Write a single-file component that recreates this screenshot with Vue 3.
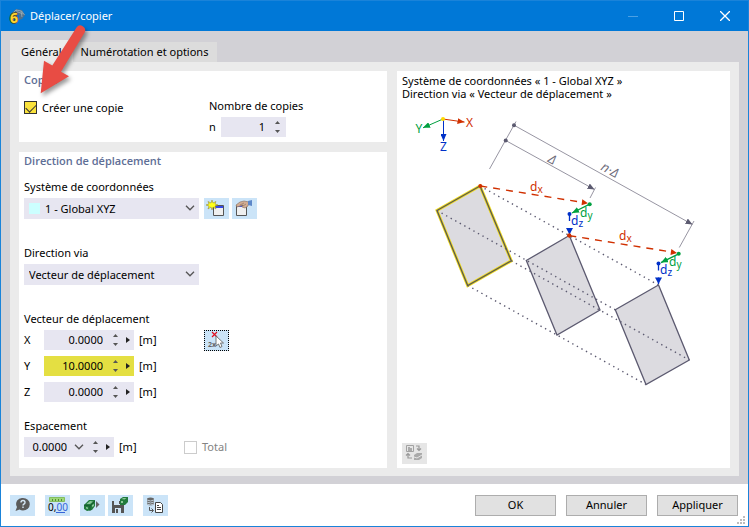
<script setup>
import { reactive, ref } from 'vue'

const makeCopy = ref(true)
const copies = ref('1')
const system = ref('1 - Global XYZ')
const via = ref('Vecteur de déplacement')
const spacing = ref('0.0000')
const total = ref(false)
const vector = reactive([
  { axis: 'X', value: '0.0000', marked: false },
  { axis: 'Y', value: '10.0000', marked: true },
  { axis: 'Z', value: '0.0000', marked: false },
])

const outlines = [
  { points: '480,185.5 437,210 467.7,285 511.3,260.3', source: true },
  { points: '569.3,235 526.3,260 557,334.5 600,309.5', source: false },
  { points: '658.5,284.5 615.3,309.3 646,384 689.3,359.5', source: false },
]
const traces = [
  [480, 185.5, 658.5, 284.5],
  [437, 210, 615.3, 309.3],
  [511.3, 260.3, 689.3, 359.5],
  [467.7, 285, 646, 384],
]
const steps = [[0, 0], [89, 49.6]]
</script>

<template>
  <main class="window">
    <header class="titlebar">
      <svg class="app-icon" viewBox="0 0 16 17" aria-hidden="true">
        <path d="M2 6 7 1l6 1 3 5-3 4-3 1V7L7 6 3 9z" fill="#50708c" />
        <path d="M3 6 7 2l5.500 1 3 4M5 7l4-3 5 2M7 2l2 3M12 3l1 6" fill="none" stroke="#9fb0b8" stroke-width=".8" />
        <text x="1" y="15">6</text>
      </svg>
      <h1>Déplacer/copier</h1>
      <button class="caption" aria-label="Réduire" disabled>
        <svg viewBox="0 0 10 10"><path d="M0 5.500h10" stroke="#4ba0e4" /></svg>
      </button>
      <button class="caption" aria-label="Agrandir">
        <svg viewBox="0 0 10 10"><path d="M.5.5h9v9h-9z" stroke="#fff" /></svg>
      </button>
      <button class="caption" aria-label="Fermer">
        <svg viewBox="0 0 10 10"><path d="m0 0 10 10M10 0 0 10" stroke="#fff" stroke-width="1.300" /></svg>
      </button>
    </header>

    <div class="body">
      <nav class="tabs" role="tablist">
        <button class="tab active" role="tab" aria-selected="true">Général</button>
        <button class="tab" role="tab" aria-selected="false">Numérotation et options</button>
      </nav>

      <div class="panel">
        <div class="column">
          <section class="card">
            <h2>Copier</h2>
            <div class="copy-row">
              <label class="check">
                <input v-model="makeCopy" class="box highlighted" type="checkbox" />
                <span>Créer une copie</span>
              </label>
              <div class="field">
                <label class="caption-text" for="copies">Nombre de copies</label>
                <div class="line">
                  <span class="letter">n</span>
                  <div class="spin short">
                    <input id="copies" v-model="copies" />
                    <span class="arrows">
                      <button aria-label="Augmenter"><svg viewBox="0 0 5 3"><path d="M0 3h5L2.500 0z" /></svg></button>
                      <button aria-label="Diminuer"><svg viewBox="0 0 5 3"><path d="M0 0h5L2.500 3z" /></svg></button>
                    </span>
                  </div>
                </div>
              </div>
            </div>
          </section>

          <section class="card grow">
            <h2>Direction de déplacement</h2>
            <div class="form">
              <div class="field">
                <label class="caption-text" for="system">Système de coordonnées</label>
                <div class="line">
                  <div class="drop with-swatch">
                    <i class="swatch"></i>
                    <select id="system" v-model="system"><option>1 - Global XYZ</option></select>
                    <svg class="chevron" viewBox="0 0 10 6"><path d="m1 .8 4 4 4-4" /></svg>
                  </div>
                  <div class="tools">
                    <button class="tool" aria-label="Nouveau système">
                      <svg viewBox="0 0 25 21">
                        <path d="M9.500 7.500h10v10h-10z" fill="#efefef" stroke="#555" />
                        <path d="M10 8h9v2h-9z" fill="#3548e8" />
                        <path d="m8 2 1 3 3-1.500L11 6l3 1-3 1 1 3-3-2-1 3-1-3-3 2 1-3-3-1 3-1-1-2.500L7 5z" fill="#ffff18" stroke="#8a7d28" stroke-width=".5" />
                      </svg>
                    </button>
                    <button class="tool" aria-label="Modifier le système">
                      <svg viewBox="0 0 25 21">
                        <path d="M4.500 7.500h10v10h-10z" fill="#efefef" stroke="#555" />
                        <path d="M5 7h5v2H5z" fill="#4c58d8" />
                        <path d="m4 7 4-3 4-1 5 1-1 4-3 2-3-1 1-2-3 1-3 1z" fill="#d2ad93" stroke="#846b5d" stroke-width=".6" />
                        <path d="m8 7 4-2M11 8l3-2" stroke="#846b5d" stroke-width=".6" />
                        <path d="m16 3 4-1v6l-4-1z" fill="#5d87c9" />
                      </svg>
                    </button>
                  </div>
                </div>
              </div>

              <div class="field">
                <label class="caption-text" for="via">Direction via</label>
                <div class="line">
                  <div class="drop">
                    <select id="via" v-model="via"><option>Vecteur de déplacement</option></select>
                    <svg class="chevron" viewBox="0 0 10 6"><path d="m1 .8 4 4 4-4" /></svg>
                  </div>
                </div>
              </div>

              <div class="field vector">
                <span class="caption-text">Vecteur de déplacement</span>
                <div class="vector-line">
                  <div class="axes">
                    <div v-for="row in vector" :key="row.axis" class="line">
                      <label class="axis" :for="'axis-' + row.axis">{{ row.axis }}</label>
                      <div class="spin" :class="{ marked: row.marked }">
                        <input :id="'axis-' + row.axis" v-model="row.value" />
                        <span class="arrows">
                          <button aria-label="Augmenter"><svg viewBox="0 0 5 3"><path d="M0 3h5L2.500 0z" /></svg></button>
                          <button aria-label="Diminuer"><svg viewBox="0 0 5 3"><path d="M0 0h5L2.500 3z" /></svg></button>
                        </span>
                        <button class="more" aria-label="Plus"><svg viewBox="0 0 4 6"><path d="M0 0v6l4-3z" /></svg></button>
                      </div>
                      <span class="unit">[m]</span>
                    </div>
                  </div>
                  <button class="tool focused" aria-label="Choisir deux points">
                    <svg viewBox="0 0 25 21">
                      <path d="m8 2 5 5m0-5-5 5" stroke="#e01020" stroke-width="1.200" />
                      <text x="4" y="17">2x</text>
                      <path d="M12 6v10l2.500-2 1.500 3.500 2-1-1.500-3.500h3z" fill="#fff" stroke="#666" stroke-width=".9" />
                    </svg>
                  </button>
                </div>
              </div>

              <div class="field">
                <label class="caption-text" for="spacing">Espacement</label>
                <div class="line">
                  <div class="spin compact">
                    <input id="spacing" v-model="spacing" />
                    <button class="open" aria-label="Ouvrir la liste"><svg class="chevron" viewBox="0 0 10 6"><path d="m1 .8 4 4 4-4" /></svg></button>
                    <span class="arrows">
                      <button aria-label="Augmenter"><svg viewBox="0 0 5 3"><path d="M0 3h5L2.500 0z" /></svg></button>
                      <button aria-label="Diminuer"><svg viewBox="0 0 5 3"><path d="M0 0h5L2.500 3z" /></svg></button>
                    </span>
                    <button class="more" aria-label="Plus"><svg viewBox="0 0 4 6"><path d="M0 0v6l4-3z" /></svg></button>
                  </div>
                  <span class="unit wide">[m]</span>
                  <label class="check disabled">
                    <input v-model="total" class="box" type="checkbox" disabled />
                    <span>Total</span>
                  </label>
                </div>
              </div>
            </div>
          </section>
        </div>

        <section class="card preview">
          <p>Système de coordonnées « 1 - Global XYZ »<br />Direction via « Vecteur de déplacement »</p>
          <svg class="diagram" viewBox="397 100 333 342" role="img" aria-label="Schéma du déplacement">
            <defs>
              <marker v-for="c in ['#d03000', '#00a040', '#0030c8', '#5c5a70']" :id="'tip' + c.slice(1)" :key="c" viewBox="0 0 7 6" refX="7" refY="3" markerWidth="7" markerHeight="6" markerUnits="userSpaceOnUse" orient="auto">
                <path d="M0 0 7 3 0 6z" :fill="c" />
              </marker>
            </defs>
            <path d="M443 118.500 464.500 121.600" stroke="#d03000" marker-end="url(#tipd03000)" />
            <path d="M443 118.500 423 127.300" stroke="#00a040" marker-end="url(#tip00a040)" />
            <path d="M443.500 118.500v22" stroke="#0030c8" marker-end="url(#tip0030c8)" />
            <circle cx="443" cy="118.500" r="2" fill="#ffd800" />
            <text x="466" y="126" fill="#d03000">X</text>
            <text x="415.500" y="132" fill="#00a040">Y</text>
            <text x="440" y="150" fill="#0030c8">Z</text>

            <g stroke="#8b8997" stroke-width=".9">
              <path d="M489.500 168.500 516 121M595.500 187l-5.500 10.500M694 220.500 679.300 247" />
              <path d="M505.700 140 594.500 189" marker-end="url(#tip5c5a70)" />
              <path d="M514 124.700 692.500 224" marker-end="url(#tip5c5a70)" />
            </g>
            <circle cx="505.700" cy="140" r="2" fill="#5c5a70" />
            <circle cx="514" cy="124.700" r="2" fill="#5c5a70" />
            <text class="measure" transform="translate(547 161) rotate(29)">Δ</text>
            <text class="measure" transform="translate(600 169) rotate(29)">n·Δ</text>

            <template v-for="shape in outlines" :key="shape.points">
              <polygon :points="shape.points" fill="#dcdbe0" :stroke="shape.source ? '#f0dc20' : '#5c5a70'" :stroke-width="shape.source ? 3 : 1.3" />
              <polygon v-if="shape.source" :points="shape.points" stroke="#5c5a50" stroke-width="1.300" />
            </template>
            <line v-for="t in traces" :key="t[0]" class="trace" :x1="t[0]" :y1="t[1]" :x2="t[2]" :y2="t[3]" />

            <g v-for="s in steps" :key="s[0]" :transform="`translate(${s[0]} ${s[1]})`">
              <path d="M480.300 185.500 582 201.800" stroke="#d03000" stroke-width="1.400" stroke-dasharray="7 6" />
              <path d="m582.300 198.800-.8 6 6.500-2z" fill="#d03000" />
              <circle cx="480.300" cy="185.500" r="2" fill="#d03000" />
              <path d="M589.700 203.700 572 212.500" stroke="#00a040" stroke-width="1.300" marker-end="url(#tip00a040)" />
              <circle cx="589.700" cy="203.700" r="2" fill="#00a040" />
              <path d="M569.500 213.500v20.500" stroke="#0030c8" stroke-width="1.300" stroke-dasharray="7 7 7" />
              <path d="M566 227.500h7l-3.500 6.500z" fill="#0030c8" />
              <circle cx="569.500" cy="213.500" r="2" fill="#0030c8" />
              <text x="530" y="190" fill="#d03000">d<tspan class="sub" dy="2">x</tspan></text>
              <text x="580" y="216" fill="#00a040">d<tspan class="sub" dy="2">y</tspan></text>
              <text x="571" y="224" fill="#0030c8">d<tspan class="sub" dy="2">z</tspan></text>
            </g>
            <circle cx="569.300" cy="235" r="2" fill="#d03000" />
          </svg>
          <button class="tool muted" aria-label="Changer l’image" disabled>
            <svg viewBox="0 0 25 21">
              <path d="M4.500 2.500h7v6h-7z" stroke="#a2a2a2" />
              <path d="M6 4h2v1h2v3H6z" fill="#aaa" />
              <path d="M14 3h3v4m-2-1.500 2 2 2-2M6 11v4h4M4 12.500l2-2 2 2" stroke="#999" stroke-width="1.200" />
              <path d="m12 12 3-2h5v5l-3 2h-5z" fill="#aaa" />
              <path d="m12 14 3 1 5-3" stroke="#e6e6e6" />
            </svg>
          </button>
        </section>
      </div>
    </div>

    <footer class="footer">
      <div class="toolbar">
        <button class="tool" aria-label="Aide">
          <svg viewBox="0 0 25 21">
            <path d="M13 3a6.500 6 0 0 1 0 12.500q-2 0-3.500-1L5.500 16l1.500-4A6 6 0 0 1 13 3z" fill="#5b5b5b" />
            <path d="M11 7.500q0-2 2-2t2 2q0 1-1 1.500t-1 1.500m0 1v1.500" stroke="#d5e7f5" stroke-width="1.400" />
          </svg>
        </button>
        <button class="tool" aria-label="Unités et décimales">
          <svg viewBox="0 0 25 21">
            <path d="M4.500 2.500h15v4h-15z" fill="#9ed878" stroke="#84be60" />
            <path d="M7.500 4v2m3-2v2m3-2v2m3-2v2" stroke="#538b35" />
            <text class="digits" x="3" y="15.500">0,<tspan fill="#3465d8">00</tspan></text>
            <path d="M11 17.500h9" stroke="#3465d8" />
          </svg>
        </button>
        <div class="pair">
          <button class="tool" aria-label="Charger les paramètres">
            <svg viewBox="0 0 25 21">
              <path d="m4 10 5-5h6v6l-3 4-5 1-3-2z" fill="#217b3d" />
              <path d="m6.500 9 3.500-3 3 .5-3 2.500zM6 12l2 .5V14l-2-.5zm6-2 2-1v2l-2 1z" fill="#8cc99b" />
              <path d="m4 10 6 1 5-5m-5 5v5" stroke="#124b28" stroke-width=".7" />
              <path d="m16 6 3.500 3.500L16 13z" fill="#666" />
            </svg>
          </button>
          <button class="tool" aria-label="Enregistrer les paramètres">
            <svg viewBox="0 0 25 21">
              <path d="M4 6h10l2 2v10H4z" fill="#555" />
              <path d="M6 6h7v4H6zm1 7h6v5H7z" fill="#cfe4f5" />
              <path d="M11 6h1v3h-1zM8 14h2v4H8z" fill="#555" />
              <path d="m12 4 3-2h5v5l-3 3h-5z" fill="#217b3d" />
              <path d="m13.500 4 2-1h3l-2 1.500zM13 6h2v2h-2z" fill="#8cc99b" />
            </svg>
          </button>
        </div>
        <button class="tool" aria-label="Base de données vers rapport">
          <svg viewBox="0 0 25 21">
            <path d="M4 3.500q3.500-2 7 0v6q-3.500 2-7 0z" fill="#666" />
            <path d="M4 5q3.500 2 7 0M4 7q3.500 2 7 0M4 9q3.500 2 7 0" stroke="#d5e7f5" stroke-width=".8" />
            <path d="M6.500 12v3.500H10M8.500 13.500l2 2-2 2" stroke="#555" />
            <path d="M12.500 7.500h5l2 2v8h-7z" fill="#fff" stroke="#444" />
            <path d="M14 10.500h2m-2 2h4m-4 2h4" stroke="#444" />
          </svg>
        </button>
      </div>
      <div class="actions">
        <button>OK</button>
        <button>Annuler</button>
        <button>Appliquer</button>
      </div>
      <svg class="grip" viewBox="0 0 8 8" aria-hidden="true">
        <path d="M6 0h2v2H6zM3 3h2v2H3zM6 3h2v2H6zM0 6h2v2H0zM3 6h2v2H3zM6 6h2v2H6z" fill="#bdbdbd" />
      </svg>
    </footer>

    <svg class="pointer" viewBox="0 0 60 80" aria-hidden="true">
      <path d="M11.700 74.300 15 41.700l8.300 4.800L47.500 8.500a4.800 4.800 0 0 1 8.300 4.700L32 52.700l8 4.600z" fill="#e84c44" />
    </svg>
  </main>
</template>

<style>
body { margin: 0; }
</style>

<style scoped>
* { box-sizing: border-box; }
.window {
  position: relative;
  display: flex;
  flex-direction: column;
  min-height: 100vh;
  border: 1px solid #1a83d9;
  background: #fff;
  color: #000;
  font: 11px/18px "Noto Sans", "Open Sans", sans-serif;
}
button, input, select { margin: 0; padding: 0; border: 0; border-radius: 0; background: none; color: inherit; font: inherit; }
svg { display: block; fill: none; }
h1, h2, p { margin: 0; }

.titlebar { display: flex; align-items: center; height: 30px; padding-left: 8px; background: #0078d7; color: #fff; }
.app-icon { width: 16px; height: 17px; margin-right: 5px; overflow: visible; }
.app-icon text { font: bold 14px "Open Sans", sans-serif; fill: #ffd52e; stroke: #584b20; stroke-width: 1.5px; paint-order: stroke; }
h1 { flex: 1; font-size: 11px; font-weight: 400; }
.caption { display: grid; place-items: center; width: 46px; height: 30px; }
.caption svg { width: 10px; height: 10px; }

.body { flex: 1; display: flex; flex-direction: column; padding: 9px 9px 8px; background: #d2d1d6; }
.tabs { display: flex; align-items: flex-end; }
.tab { height: 20px; padding: 0 9px 0 8px; background: #dcdcdc; }
.tab.active { height: 22px; padding: 2px 11px 0 11px; background: #ebebeb; }
.panel { flex: 1; display: grid; grid-template-columns: 368px minmax(0, 1fr); gap: 10px; padding: 9px 9px 8px; background: #ebebeb; }
.column { display: flex; flex-direction: column; gap: 10px; }
.card { background: #fff; }
.grow { flex: 1; }
h2 { padding-left: 5px; color: #5e6e96; font-family: "Open Sans", sans-serif; font-size: 11px; line-height: 18px; font-weight: 600; }

.copy-row { display: grid; grid-template-columns: 185px 1fr; align-items: start; padding: 8px 5px 5px; }
.form { display: flex; flex-direction: column; gap: 25px; padding: 8px 5px 11px; }
.field { display: flex; flex-direction: column; gap: 2px; }
.vector { margin-bottom: -10px; }
.caption-text { height: 18px; }
.line { display: flex; align-items: center; }
.letter { width: 12px; }
.axis { width: 20px; }
.unit { padding-left: 5px; }
.unit.wide { width: 70px; }
.vector-line { display: flex; align-items: flex-start; }
.axes { display: flex; flex-direction: column; gap: 6px; width: 180px; }

.check { display: flex; align-items: center; gap: 5px; height: 21px; }
.check.disabled { height: 20px; color: #838383; }
.box { appearance: none; width: 13px; height: 13px; border: 1px solid #333; background: #fff; }
.box.highlighted { background: #fae23c; }
.box.highlighted:checked::after { content: ""; display: block; width: 9px; height: 5px; margin: 2px 0 0 1px; border: solid #333; border-width: 0 0 1px 1px; transform: rotate(-45deg); }
.box:disabled { border-color: #ccc; }

.drop { position: relative; width: 175px; height: 21px; background: #e7e6f1; }
.drop select { appearance: none; display: block; width: 100%; height: 21px; padding-left: 5px; }
.with-swatch select { padding-left: 21px; }
.swatch { position: absolute; left: 5px; top: 5px; width: 11px; height: 11px; background: #cff; }
.chevron { width: 10px; height: 6px; stroke: #555; stroke-width: 1.3px; }
.drop .chevron { position: absolute; right: 4px; top: 7px; pointer-events: none; }

.spin { display: flex; align-items: center; width: 90px; height: 20px; background: #e7e6f1; }
.spin input { width: 59px; min-width: 0; text-align: right; }
.spin.marked { background: #e4df42; }
.spin.short { width: 65px; }
.spin.short input { width: 44px; }
.spin.compact input { width: 43px; }
.arrows { display: flex; flex-direction: column; justify-content: center; gap: 6px; width: 17px; margin-left: 4px; }
.arrows button { display: flex; justify-content: center; height: 3px; }
.arrows svg { width: 5px; height: 3px; fill: #555; }
.compact .arrows { width: 17px; margin-left: 3px; }
.more svg { width: 4px; height: 6px; margin-left: 2px; fill: #222; }
.open { margin-left: 7px; }

.tools, .pair { display: flex; gap: 3px; }
.tools { padding-left: 5px; }
.tool { width: 25px; height: 21px; background: #cbe4f8; }
.tool svg { width: 25px; height: 21px; }
.tool.focused { outline: 1px dotted #000; outline-offset: -1px; }
.tool.focused text { font: bold 7px "Open Sans", sans-serif; fill: #666; }
.tool.muted { margin-left: 5px; background: #e6e6e6; }

.preview { display: flex; flex-direction: column; padding: 3px 0 4px; }
.preview p { padding-left: 5px; line-height: 13px; }
.diagram { width: 100%; flex: 1; min-height: 0; }
.diagram text { font: 12px "Noto Sans", sans-serif; }
.diagram text .sub { font-size: 10px; }
.diagram text.measure { font: italic 13px "Open Sans", sans-serif; fill: #6d6b7a; }
.trace { stroke: #5c5a70; stroke-width: 1.4px; stroke-dasharray: 1.4 3.8; }

.footer { position: relative; display: flex; align-items: center; justify-content: space-between; height: 42px; padding: 0 10px 0 9px; }
.toolbar, .actions { display: flex; gap: 10px; }
.digits { font: 10px "Noto Sans", sans-serif; fill: #000; }
.actions button { width: 81px; height: 21px; border: 1px solid #adadad; background: #e1e1e1; line-height: 18px; }
.grip { position: absolute; right: 3px; bottom: 2px; width: 8px; height: 8px; }
.pointer { position: absolute; left: 28px; top: 18px; width: 60px; height: 80px; pointer-events: none; filter: drop-shadow(2px 3px 2px rgba(0, 0, 0, .4)); }
</style>
